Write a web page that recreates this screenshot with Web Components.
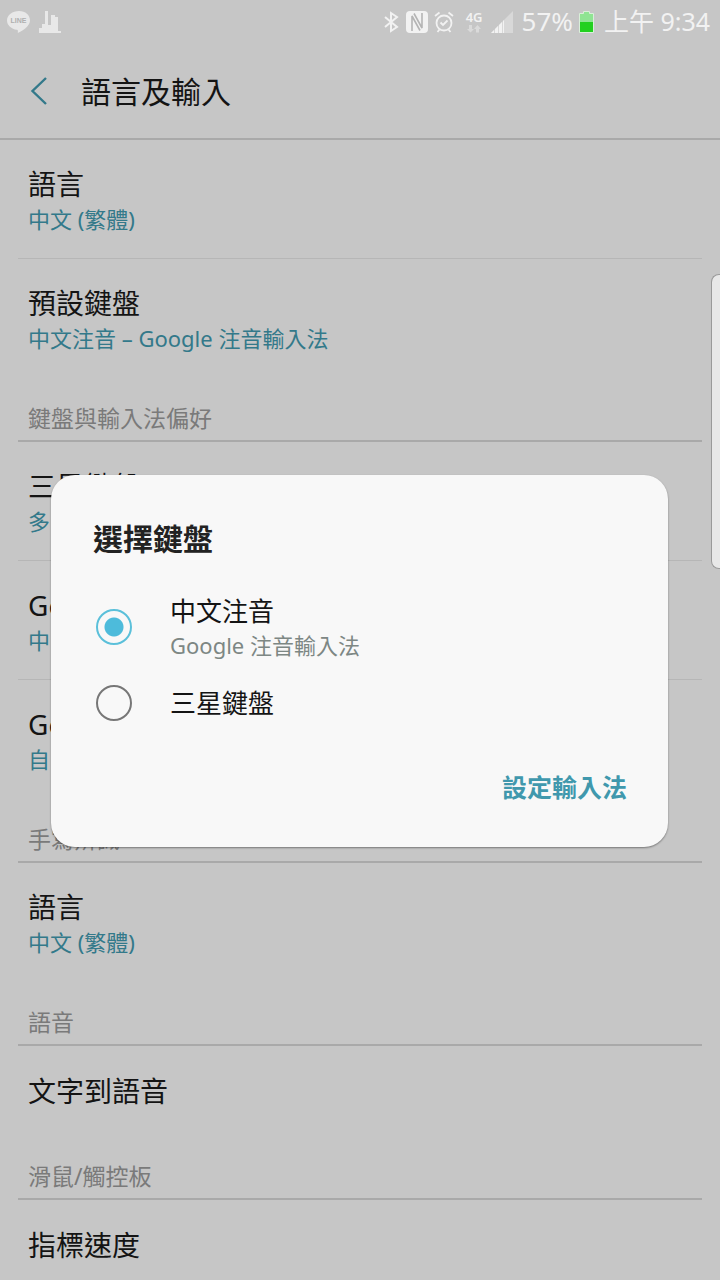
<!DOCTYPE html>
<html lang="zh-Hant">
<head>
<meta charset="utf-8">
<meta name="viewport" content="width=device-width, initial-scale=1">
<title>語言及輸入</title>
<style>
  body {
    margin: 0;
    font-family: "Noto Sans", "Noto Sans CJK TC", sans-serif;
    background: #c6c6c6;
    color: #141414;
    --accent: #33798a;
    --line: #a9a9a9;
    --line-soft: #b6b6b6;
    --muted: #7a7a7a;
  }
</style>
</head>
<body>
<settings-screen>
  <status-bar slot="status" battery="57%" time="上午 9:34"></status-bar>
  <app-header slot="header">語言及輸入</app-header>

  <setting-row divider>語言<span slot="summary">中文 (繁體)</span></setting-row>
  <setting-row>預設鍵盤<span slot="summary">中文注音 – Google 注音輸入法</span></setting-row>
  <section-label>鍵盤與輸入法偏好</section-label>
  <setting-row divider>三星鍵盤<span slot="summary">多</span></setting-row>
  <setting-row divider>Go<span slot="summary">中</span></setting-row>
  <setting-row>Go<span slot="summary">自</span></setting-row>
  <section-label>手寫辨識</section-label>
  <setting-row>語言<span slot="summary">中文 (繁體)</span></setting-row>
  <section-label>語音</section-label>
  <setting-row single>文字到語音</setting-row>
  <section-label>滑鼠/觸控板</section-label>
  <setting-row single>指標速度</setting-row>

  <edge-handle slot="overlay"></edge-handle>
  <keyboard-dialog slot="overlay" heading="選擇鍵盤" action="設定輸入法">
    <radio-option checked label="中文注音" detail="Google 注音輸入法"></radio-option>
    <radio-option label="三星鍵盤"></radio-option>
  </keyboard-dialog>
</settings-screen>

<script>
const define = (name, render) => customElements.define(name, class extends HTMLElement {
  constructor() {
    super();
    this.attachShadow({ mode: "open" });
  }
  connectedCallback() {
    this.shadowRoot.innerHTML = render(this);
  }
});

define("settings-screen", () => `
  <style>
    :host { display: flex; flex-direction: column; position: relative; height: 100vh; overflow: hidden; }
    main { flex: 1; min-height: 0; overflow: hidden; }
  </style>
  <slot name="status"></slot>
  <slot name="header"></slot>
  <main><slot></slot></main>
  <slot name="overlay"></slot>`);

define("status-bar", el => `
  <style>
    :host { display: flex; justify-content: space-between; align-items: center; height: 44px; padding: 0 10px 0 7px; color: #f2f2f2; font-size: 25px; line-height: 42px; }
    div { display: flex; align-items: center; }
    .left { gap: 8px; }
    svg { display: block; flex: none; }
    .nfc { margin-left: 7px; }
    .alarm { margin-left: 6px; }
    .net { flex-direction: column; margin-left: 12px; font-size: 13px; line-height: 12px; font-weight: 600; gap: 2px; }
    .signal { margin-left: 8px; }
    .battery { margin: 0 10px 0 6px; }
    .percent { margin-left: 9px; font-size: 26px; }
    .percent, .time { height: 44px; }
  </style>
  <div class="left">
    <svg width="24" height="24" viewBox="0 0 24 24" aria-label="LINE">
      <path d="M12 1C5.500 1 0 5 0 10.500c0 4.800 4.500 8.600 10 9.300 1 .2 1 .8.800 3.200 3.500-1.500 12.200-6.500 12.200-12.500C23 5 18.500 1 12 1z" fill="#e8e8e8"/>
      <text x="3.500" y="13" font-family="Liberation Sans" font-weight="700" font-size="7" fill="#b0b0b0">LINE</text>
    </svg>
    <svg width="24" height="24" viewBox="0 0 24 24">
      <path d="M0 23v-5h3v-4h3V1h3v14h3V5h4v2h3v14h3v2z" fill="#e8e8e8"/>
    </svg>
  </div>
  <div>
    <svg width="15" height="22" viewBox="0 0 15 22" fill="none" stroke="#f2f2f2" stroke-width="2">
      <path d="M1 6l12 10-6 4V2l6 4L1 16"/>
    </svg>
    <svg class="nfc" width="22" height="22" viewBox="0 0 22 22">
      <rect width="22" height="22" rx="4" fill="#f2f2f2"/>
      <path d="M6 20V5l8 14.500M16 2v15L8 2.500" fill="none" stroke="#b4b4b4" stroke-width="1.600"/>
    </svg>
    <svg class="alarm" width="20" height="22" viewBox="0 0 20 22" fill="none" stroke="#f2f2f2" stroke-width="1.800">
      <circle cx="10" cy="12" r="7.500"/>
      <path d="M6.500 11.500l2.500 2.500 4.500-4.500M1 5l4.500-3.500M19 5l-4.500-3.500M5.500 18.500l-2 2.500M14.500 18.500l2 2.500"/>
    </svg>
    <div class="net">
      <span>4G</span>
      <svg width="14" height="8" viewBox="0 0 14 8" fill="#dadada">
        <path d="M2 0h3v4h2L3.500 7.500 0 4h2zM9 7.500h3V4h2L10.500 0 7 4h2z"/>
      </svg>
    </div>
    <svg class="signal" width="22" height="22" viewBox="0 0 22 22">
      <path d="M22 0v22H0z" fill="#d8d8d8"/>
      <path d="M0 22l3-3v3zM4 22v-4l3-3v7zM8 22v-8l3-3v11zM12 22V10l1-1v13z" fill="#f2f2f2"/>
    </svg>
    <span class="percent">${el.getAttribute("battery")}</span>
    <svg class="battery" width="15" height="22" viewBox="0 0 15 22">
      <path d="M.5 2.500h4v-2h6v2h4v19H.5z" fill="#8fe493" stroke="#d9efd9"/>
      <path d="M1 11h13v10H1z" fill="#22d01f"/>
    </svg>
    <span class="time">${el.getAttribute("time")}</span>
  </div>`);

define("app-header", () => `
  <style>
    :host { display: flex; align-items: center; gap: 32px; height: 94px; padding-left: 29px; border-bottom: 2px solid var(--line); }
    button { display: block; padding: 0; border: 0; background: none; }
    svg { display: block; }
    h1 { margin: 0; padding-top: 2px; font-size: 30px; line-height: 44px; font-weight: 400; }
  </style>
  <button aria-label="返回">
    <svg width="20" height="30" viewBox="0 0 20 30" fill="none" stroke="#33798a" stroke-width="2.400"><path d="M17 2L3.500 15 17 28"/></svg>
  </button>
  <h1><slot></slot></h1>`);

define("setting-row", () => `
  <style>
    :host { display: block; box-sizing: border-box; height: 119px; margin: 0 18px; padding: 24px 10px 0; border-bottom: 1px solid transparent; }
    :host([divider]) { border-bottom-color: var(--line-soft); }
    :host([single]) { height: 90px; padding-top: 25px; }
    .title { font-size: 28px; line-height: 40px; }
    .summary { font-size: 22px; line-height: 30px; color: var(--accent); }
  </style>
  <div class="title"><slot></slot></div>
  <div class="summary"><slot name="summary"></slot></div>`);

define("section-label", () => `
  <style>
    :host { display: block; margin: 0 18px; }
    h2 { box-sizing: border-box; height: 64px; margin: 0; padding: 22px 10px 0; border-bottom: 2px solid var(--line); font-size: 23px; line-height: 36px; font-weight: 400; color: var(--muted); }
  </style>
  <h2><slot></slot></h2>`);

define("edge-handle", () => `
  <style>
    :host { display: block; position: absolute; top: 274px; right: 0; box-sizing: border-box; width: 9px; height: 295px; border: 1px solid #9a9a9a; border-right: 0; border-radius: 8px 0 0 8px; background: #e8e8e8; }
  </style>`);

define("keyboard-dialog", el => `
  <style>
    :host { position: absolute; inset: 0; display: flex; align-items: center; padding: 42px 52px 0 51px; }
    section { flex: 1; box-sizing: border-box; padding: 42px 31px 36px 42px; border-radius: 24px; background: #f8f8f8; box-shadow: 0 1px 2px #0006; }
    h2 { margin: 0 0 24px; font-size: 30px; line-height: 44px; font-weight: 700; color: #222; }
    .options { display: flex; flex-direction: column; gap: 8px; }
    footer { display: flex; justify-content: flex-end; margin-top: 34px; }
    button { padding: 0 10px; border: 0; background: none; font: 700 25px/48px "Noto Sans", "Noto Sans CJK TC", sans-serif; color: #4098ad; }
  </style>
  <section role="dialog" aria-labelledby="heading">
    <h2 id="heading">${el.getAttribute("heading")}</h2>
    <div class="options"><slot></slot></div>
    <footer><button>${el.getAttribute("action")}</button></footer>
  </section>`);

define("radio-option", el => `
  <style>
    :host { display: block; }
    label { display: flex; align-items: center; gap: 38px; padding-left: 3px; }
    input { appearance: none; flex: none; box-sizing: border-box; width: 36px; height: 36px; margin: 0; border: 2px solid #777; border-radius: 50%; }
    input:checked { border-color: #5bc0da; background: radial-gradient(circle, #4dbbdb 9px, transparent 10px); }
    .text { display: block; padding: 8px 0; }
    .name { display: block; font-size: 26px; line-height: 36px; }
    .detail { display: block; font-size: 22px; line-height: 32px; color: #7d8784; }
  </style>
  <label>
    <input type="radio" name="keyboard" ${el.hasAttribute("checked") ? "checked" : ""}>
    <span class="text">
      <span class="name">${el.getAttribute("label")}</span>
      ${el.hasAttribute("detail") ? `<span class="detail">${el.getAttribute("detail")}</span>` : ""}
    </span>
  </label>`);
</script>
</body>
</html>
